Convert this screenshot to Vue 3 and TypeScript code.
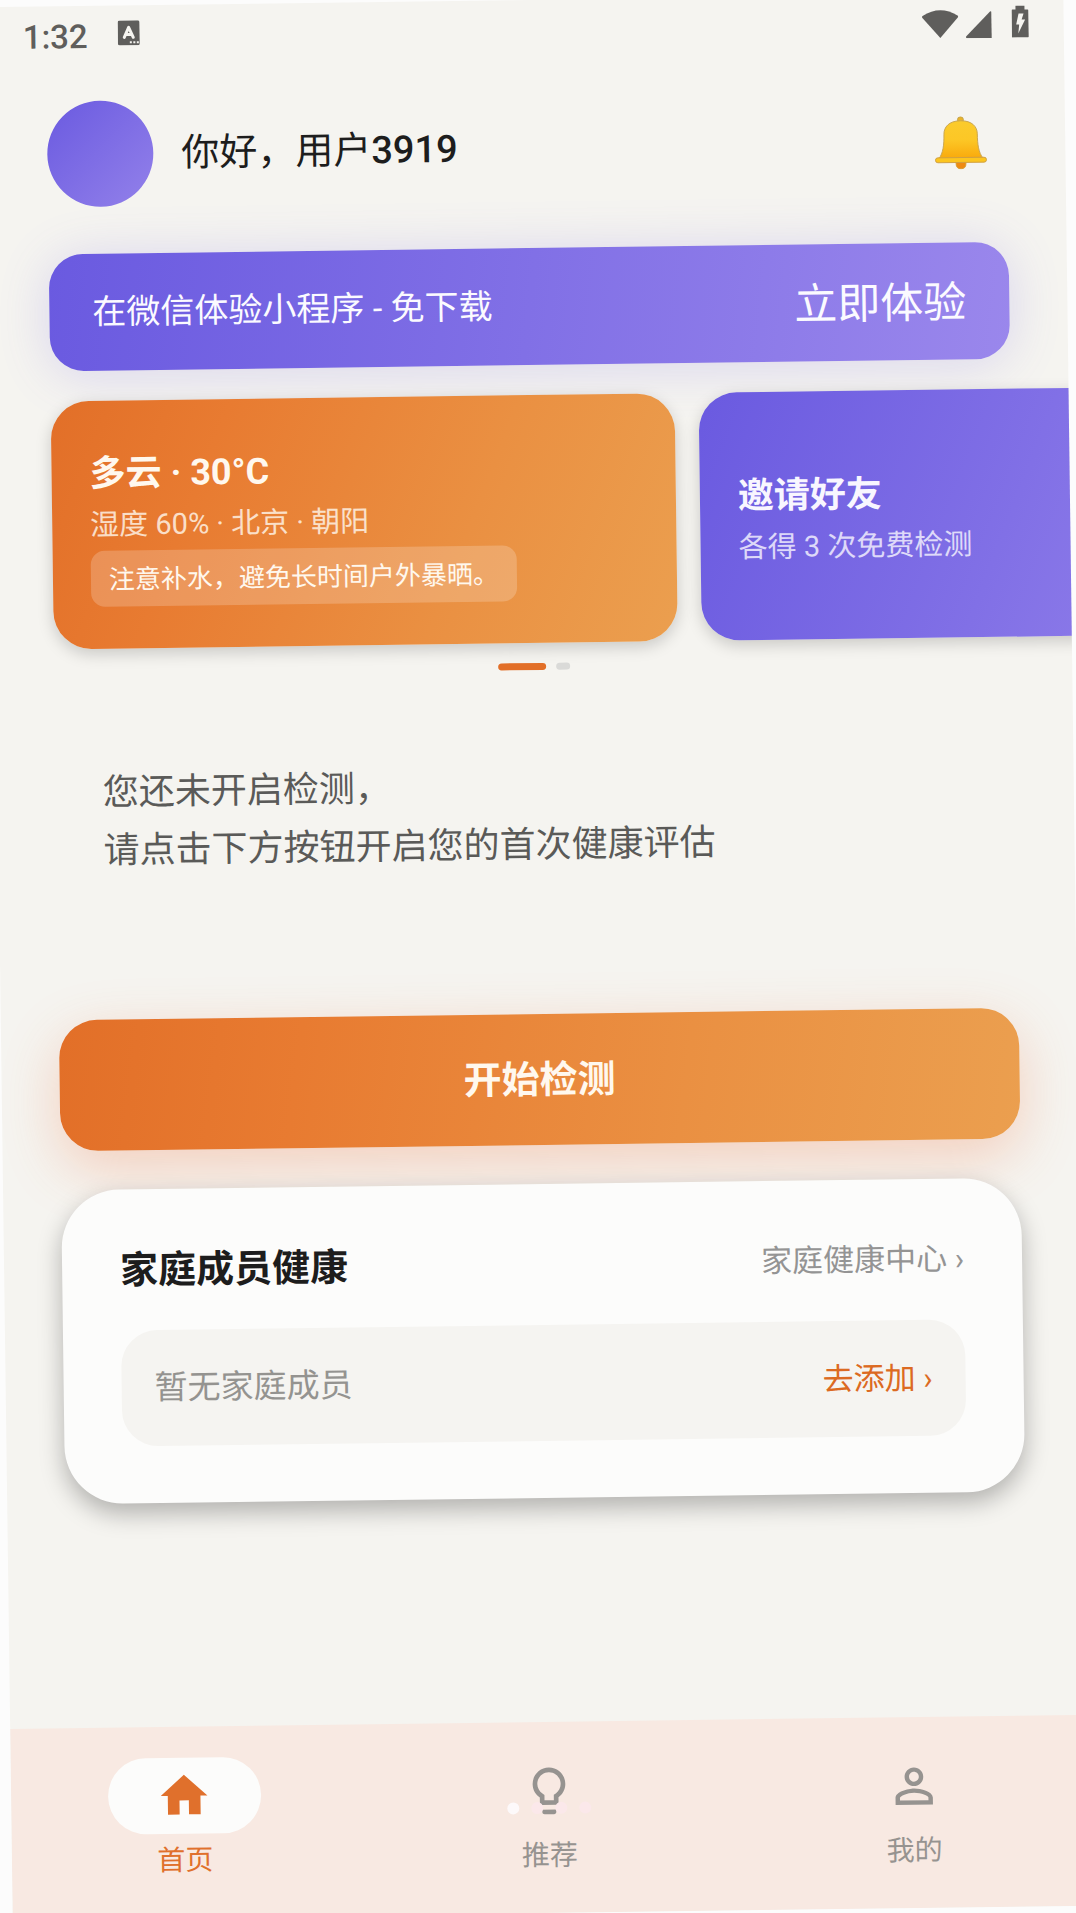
<script setup lang="ts">
interface PromoCard {
  tone: 'orange' | 'purple'
  title: string
  detail: string
  hint?: string
}

interface Tab {
  label: string
  icon: string
  active?: boolean
}

const promoCards: PromoCard[] = [
  { tone: 'orange', title: '多云 · 30°C', detail: '湿度 60% · 北京 · 朝阳', hint: '注意补水，避免长时间户外暴晒。' },
  { tone: 'purple', title: '邀请好友', detail: '各得 3 次免费检测' },
]

const tabs: Tab[] = [
  { label: '首页', icon: 'M10 20v-6h4v6h5v-8h3L12 3 2 12h3v8z', active: true },
  {
    label: '推荐',
    icon: 'M9 21c0 .55.45 1 1 1h4c.55 0 1-.45 1-1v-1H9v1zm3-19C8.14 2 5 5.14 5 9c0 2.38 1.19 4.47 3 5.74V17c0 .55.45 1 1 1h6c.55 0 1-.45 1-1v-2.26c1.81-1.27 3-3.36 3-5.74 0-3.86-3.14-7-7-7zm2.85 11.1l-.85.6V16h-4v-2.3l-.85-.6C7.8 12.16 7 10.63 7 9c0-2.76 2.24-5 5-5s5 2.24 5 5c0 1.63-.8 3.16-2.15 4.1z',
  },
  {
    label: '我的',
    icon: 'M12 5.900c1.160 0 2.100.94 2.100 2.100s-.94 2.100-2.100 2.100S9.900 9.160 9.900 8s.94-2.100 2.100-2.100m0 9c2.970 0 6.100 1.460 6.100 2.100v1.100H5.900V17c0-.64 3.130-2.100 6.100-2.100M12 4C9.790 4 8 5.790 8 8s1.790 4 4 4 4-1.790 4-4-1.790-4-4-4zm0 9c-2.670 0-8 1.340-8 4v3h16v-3c0-2.660-5.330-4-8-4z',
  },
]
</script>

<template>
  <div class="screen">
    <div class="status">
      <span class="clock">1:32</span>
      <svg class="ime" viewBox="0 0 22 25" aria-hidden="true">
        <rect width="22" height="25" rx="2" fill="#5f5e5c" />
        <path d="M6.500 17 L11 7 L15.500 17 M8 14 H14" fill="none" stroke="#f5f4f0" stroke-width="3" stroke-linecap="round" stroke-linejoin="round" />
        <path d="M12 21h2v2h-2zM15.500 21h2v2h-2zM19 21h2v2h-2z" fill="#f5f4f0" />
      </svg>
      <div class="signals">
        <svg class="wifi" viewBox="0 0 37 29" aria-hidden="true">
          <path d="M18.500 28.500 L0.800 8.200 Q0 7 1 6.200 Q18.500 -5 36 6.200 Q37 7 36.200 8.200 Z" fill="#5f5e5c" />
        </svg>
        <svg class="cell" viewBox="0 0 26 27" aria-hidden="true">
          <path d="M24.500 0.500 Q26 0 26 1.500 V27 H1 Q-0.500 26.500 0.500 25 Z" fill="#5f5e5c" />
        </svg>
        <svg class="battery" viewBox="0 0 17 32" aria-hidden="true">
          <path d="M4 0 H13 V4 H16 Q17 4 17 5 V31 Q17 32 16 32 H1 Q0 32 0 31 V5 Q0 4 1 4 H4 Z" fill="#5f5e5c" />
          <path d="M7 8 H12 L10 14 H13.500 L6.500 28 L7.500 19 H4.500 Z" fill="#f5f4f0" />
        </svg>
      </div>
    </div>

    <header class="profile">
      <div class="avatar"></div>
      <h1 class="greeting">你好，用户<span class="uid">3919</span></h1>
      <button class="bell" type="button" aria-label="通知">
        <svg viewBox="0 0 54 54" aria-hidden="true">
          <defs>
            <linearGradient id="bell-body" x1="0" y1="0" x2="0" y2="1">
              <stop offset="0" stop-color="#fbcb2c" />
              <stop offset="0.500" stop-color="#fcc726" />
              <stop offset="1" stop-color="#f9a90c" />
            </linearGradient>
          </defs>
          <path d="M22 46 H32 V48 Q32 53.500 27 53.500 Q22 53.500 22 48 Z" fill="#ee8a12" stroke="#d99a28" />
          <circle cx="27" cy="3.500" r="3" fill="#e9b32a" stroke="#c4a552" />
          <path d="M27 4.500 C15 4.500 10 11 10 18 C10 29 9 37 4.500 43 H49.500 C45 37 44 29 44 18 C44 11 39 4.500 27 4.500 Z" fill="url(#bell-body)" stroke="#c9a650" />
          <rect x="1" y="42" width="52" height="5" rx="2.500" fill="#fcc51f" stroke="#d0a040" />
        </svg>
      </button>
    </header>

    <main class="content">
      <section class="banner">
        <span class="banner-text">在微信体验小程序 - 免下载</span>
        <a class="banner-link" href="#">立即体验</a>
      </section>

      <section class="carousel">
        <article v-for="card in promoCards" :key="card.title" class="card" :class="card.tone">
          <h2 class="card-title">{{ card.title }}</h2>
          <p class="card-detail">{{ card.detail }}</p>
          <p v-if="card.hint" class="card-hint">{{ card.hint }}</p>
        </article>
      </section>
      <div class="pager">
        <i class="page current"></i>
        <i class="page"></i>
      </div>

      <p class="notice">您还未开启检测，<br />请点击下方按钮开启您的首次健康评估</p>

      <button class="start" type="button">开始检测</button>

      <section class="family">
        <div class="family-head">
          <h2 class="family-title">家庭成员健康</h2>
          <a class="family-link" href="#">家庭健康中心 ›</a>
        </div>
        <div class="family-empty">
          <span class="empty-text">暂无家庭成员</span>
          <a class="add-link" href="#">去添加 ›</a>
        </div>
      </section>
    </main>

    <nav class="tabbar">
      <a v-for="tab in tabs" :key="tab.label" class="tab" :class="{ active: tab.active }" href="#">
        <span class="tab-pill">
          <svg class="tab-icon" viewBox="0 0 24 24" aria-hidden="true"><path :d="tab.icon" fill="currentColor" /></svg>
        </span>
        <span class="tab-label">{{ tab.label }}</span>
      </a>
      <div class="loader" aria-hidden="true"><i></i><i></i><i></i><i></i></div>
    </nav>
  </div>
</template>

<style>
html,
body {
  margin: 0;
  overflow: hidden;
  background: #fcfcfc;
}
</style>

<style scoped>
.screen {
  display: flex;
  flex-direction: column;
  min-height: 100vh;
  overflow: hidden;
  background: #f5f4f0;
  color: #1d1d1d;
  font-family: Roboto, "Noto Sans CJK SC", sans-serif;
  transform: rotate(-0.76deg);
}

h1,
h2,
p {
  margin: 0;
  font-weight: 400;
}

a {
  color: inherit;
  text-decoration: none;
}

button {
  border: 0;
  padding: 0;
  font-family: inherit;
  cursor: pointer;
}

svg {
  display: block;
}

.status {
  display: flex;
  align-items: center;
  height: 55px;
  padding: 0 35px;
}

.clock {
  padding-top: 6px;
  color: #5f5e5c;
  font-size: 33px;
  font-weight: 500;
  line-height: 40px;
}

.ime {
  width: 22px;
  height: 25px;
  margin-left: 30px;
}

.signals {
  display: flex;
  align-items: flex-end;
  gap: 7px;
  margin-left: auto;
}

.wifi {
  width: 37px;
  height: 29px;
}

.cell {
  width: 26px;
  height: 27px;
}

.battery {
  width: 17px;
  height: 32px;
  margin-left: 13px;
}

.profile {
  display: flex;
  align-items: center;
  gap: 28px;
  margin-top: 40px;
  padding: 0 78px 0 58px;
}

.avatar {
  width: 106px;
  height: 106px;
  border-radius: 50%;
  background: linear-gradient(135deg, #6a5ae0, #9381ea);
}

.greeting {
  flex: 1;
  font-size: 38px;
  line-height: 48px;
}

.uid {
  font-weight: 500;
}

.bell {
  background: none;
}

.bell svg {
  width: 53px;
  height: 53px;
}

.content {
  display: flex;
  flex-direction: column;
  padding: 47px 58px 0;
}

.banner {
  display: flex;
  align-items: center;
  justify-content: space-between;
  box-sizing: border-box;
  height: 117px;
  padding: 0 43px 6px;
  border-radius: 34px;
  background: linear-gradient(97deg, #6a5ae0, #8170e6 50%, #9a87ec);
  box-shadow: 0 4px 52px rgba(106, 90, 224, 0.2);
  color: #fbfaff;
}

.banner-text {
  font-size: 34px;
}

.banner-link {
  font-size: 43px;
}

.carousel {
  display: flex;
  gap: 24px;
  margin-top: 30px;
}

.card {
  display: flex;
  flex: 0 0 65%;
  flex-direction: column;
  align-items: flex-start;
  justify-content: center;
  box-sizing: border-box;
  height: 248px;
  padding: 0 38px;
  border-radius: 38px;
  box-shadow: 0 5px 16px rgba(0, 0, 0, 0.18);
  color: #fff8ee;
}

.orange {
  background: linear-gradient(112deg, #e26f28, #e87b31 25%, #ea9042 65%, #eb9f4f);
}

.purple {
  background: linear-gradient(112deg, #6a5ae0, #8170e6 50%, #9a87ec);
  color: #f8f6ff;
}

.card-title {
  font-size: 36px;
  font-weight: 700;
  line-height: 62px;
}

.card-detail {
  font-size: 29px;
  line-height: 40px;
  opacity: 0.8;
}

.card-hint {
  margin-top: 6px;
  padding: 2px 18px 0;
  border-radius: 14px;
  background: rgba(255, 255, 255, 0.2);
  font-size: 26px;
  line-height: 54px;
}

.pager {
  display: flex;
  justify-content: center;
  gap: 10px;
  margin-top: 20px;
}

.page {
  width: 14px;
  height: 7px;
  border-radius: 4px;
  background: #dadad8;
}

.page.current {
  width: 48px;
  background: #e26f28;
}

.notice {
  margin-top: 88px;
  padding-left: 47px;
  color: #5a5a58;
  font-size: 36px;
  line-height: 58px;
}

.start {
  height: 131px;
  margin-top: 140px;
  padding-bottom: 6px;
  border-radius: 38px;
  background: linear-gradient(98deg, #e26f28, #e87b31 25%, #ea9042 65%, #eb9f4f);
  box-shadow: 0 18px 56px rgba(240, 112, 56, 0.28);
  color: #fff8ee;
  font-size: 38px;
  font-weight: 700;
}

.family {
  position: relative;
  margin-top: 39px;
  padding: 58px 58px 57px;
  border-radius: 58px;
  background: #fcfcfb;
  box-shadow: 0 10px 24px rgba(0, 0, 0, 0.28);
}

.family-head {
  display: flex;
  align-items: center;
  justify-content: space-between;
  height: 38px;
}

.family-title {
  font-size: 38px;
  font-weight: 700;
}

.family-link {
  color: #949494;
  font-size: 31px;
}

.family-empty {
  display: flex;
  align-items: center;
  justify-content: space-between;
  box-sizing: border-box;
  height: 116px;
  margin-top: 45px;
  padding: 0 33px 6px;
  border-radius: 36px;
  background: #f5f4f1;
}

.empty-text {
  color: #949390;
  font-size: 33px;
}

.add-link {
  color: #dc6a22;
  font-size: 31px;
}

.tabbar {
  position: relative;
  display: grid;
  grid-template-columns: repeat(3, 1fr);
  gap: 18px;
  box-sizing: border-box;
  height: 191px;
  margin-top: auto;
  padding-top: 31px;
  background: #f8e9e2;
}

.tab {
  display: flex;
  flex-direction: column;
  align-items: center;
  color: #969390;
}

.tab.active {
  color: #e0702c;
}

.tab-pill {
  display: flex;
  align-items: center;
  justify-content: center;
  width: 153px;
  height: 76px;
  border-radius: 38px;
}

.active .tab-pill {
  background: #fcfcfb;
}

.tab-icon {
  width: 56px;
  height: 56px;
}

.tab-label {
  margin-top: 9px;
  font-size: 28px;
  line-height: 36px;
}

.loader {
  position: absolute;
  top: 80px;
  left: 50%;
  display: flex;
  gap: 12px;
  transform: translateX(-50%);
}

.loader i {
  width: 12px;
  height: 12px;
  border-radius: 50%;
  background: #fbe8ea;
}

.loader i:first-child {
  background: #fdf9fa;
}
</style>
